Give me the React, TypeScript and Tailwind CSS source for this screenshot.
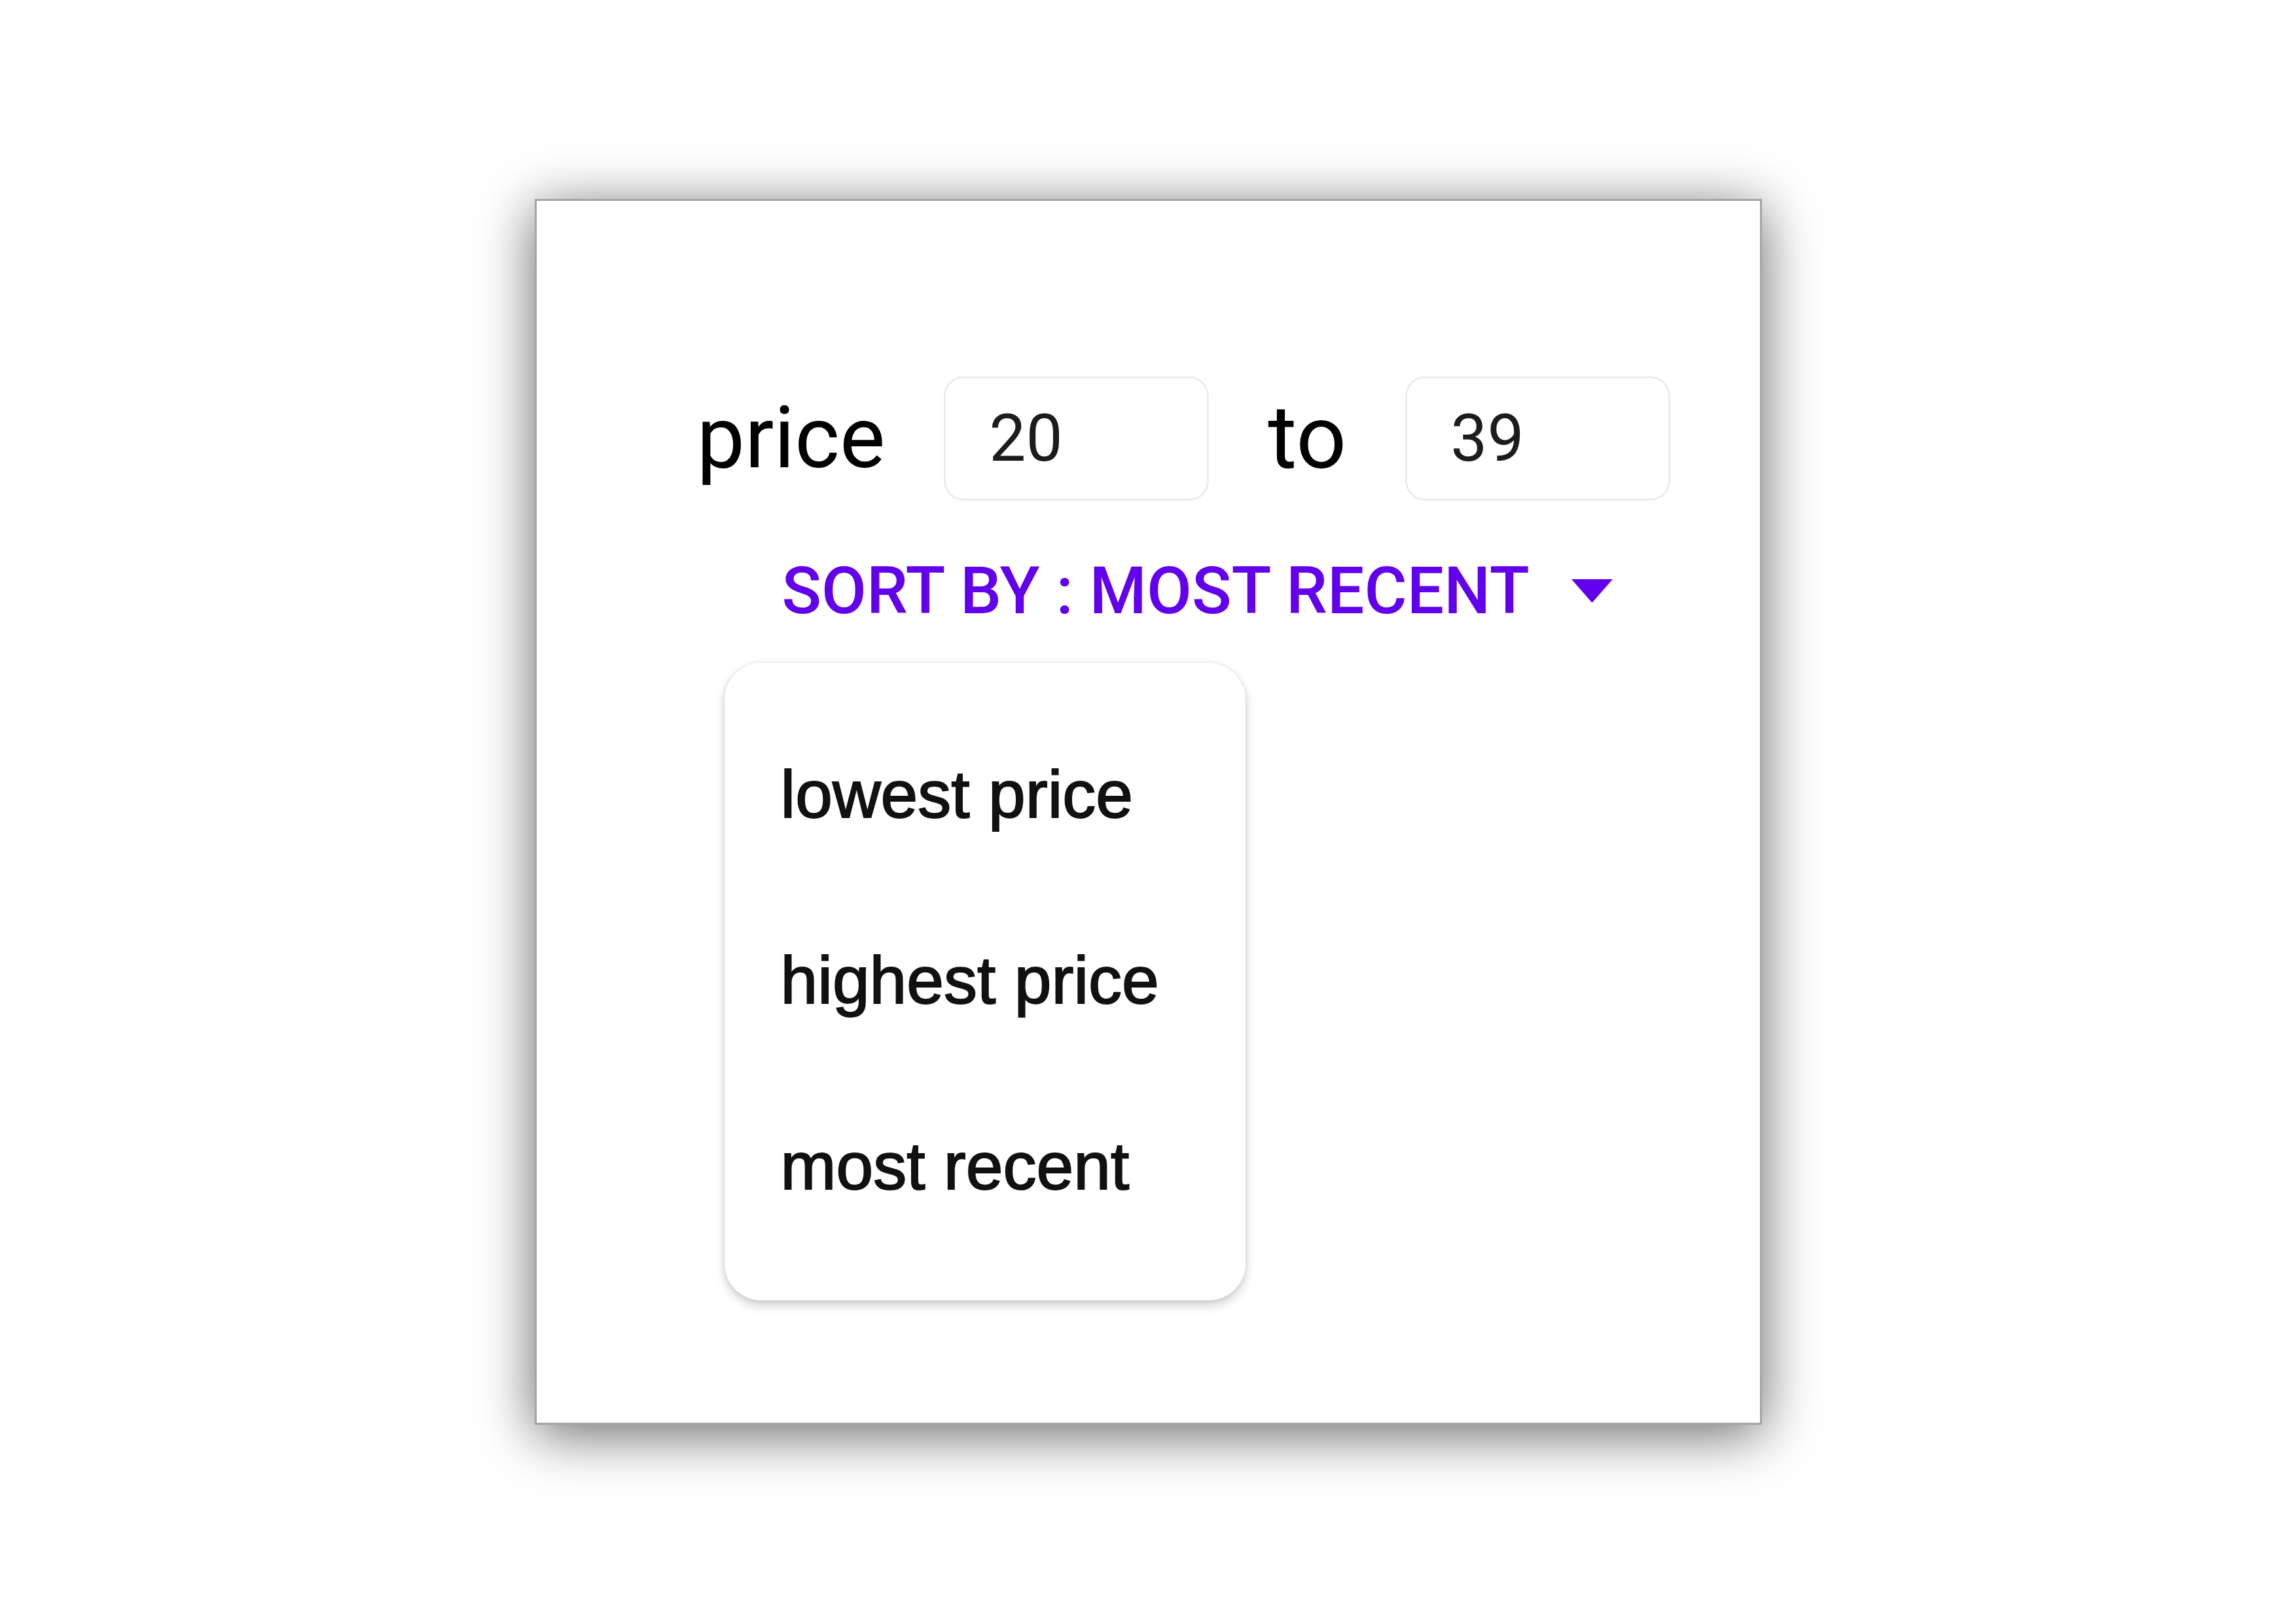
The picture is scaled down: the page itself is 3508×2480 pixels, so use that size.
import React from 'react';

const roboto = { fontFamily: 'Roboto, "Liberation Sans", sans-serif' };

const PriceInput = ({ value }: { value: string }) => (
  <input
    readOnly
    defaultValue={value}
    className="w-[405px] h-[190px] border-[3px] border-[#ececec] rounded-[30px] pl-[66px] text-[100px] text-[#1c1c1c] bg-white outline-none"
    style={roboto}
  />
);

const SortMenu = () => {
  const items = ['lowest price', 'highest price', 'most recent'];
  return (
    <div
      className="absolute left-[4px] top-[185px] w-[796px] h-[974px] bg-white rounded-[56px] py-[60px] shadow-[0_8px_16px_rgba(0,0,0,0.18),0_0_6px_rgba(0,0,0,0.1)]"
      style={{ fontFamily: '"Liberation Sans", Arial, sans-serif' }}
    >
      {items.map((item) => (
        <div
          key={item}
          className="h-[284px] flex items-center pl-[86px] text-[102px] text-[#111] [-webkit-text-stroke:2px_#111]"
        >
          {item}
        </div>
      ))}
    </div>
  );
};

export default function App() {
  return (
    <div className="min-h-screen w-full bg-white flex items-center justify-center">
      <div className="w-[1875px] h-[1873px] bg-white border-[3px] border-[#a4a4a4] shadow-[0_14px_80px_rgba(0,0,0,0.6)] pl-[245px] pt-[268px]">
        <div className="flex items-center gap-[90px]" style={roboto}>
          <span className="text-[131px] leading-none text-black">price</span>
          <PriceInput value="20" />
          <span className="text-[135px] leading-none text-black">to</span>
          <PriceInput value="39" />
        </div>

        <div className="relative inline-flex items-center h-[150px] mt-[63px] ml-[38px] pl-[92px] pr-[89px]">
          <span className="text-[100px] leading-none font-medium text-[#6200ee] uppercase" style={roboto}>
            Sort by : most recent
          </span>
          <svg width="63" height="36" viewBox="0 0 63 36" className="ml-[64px]">
            <polygon points="0,0 63,0 31.5,36" fill="#6200ee" />
          </svg>
          <SortMenu />
        </div>
      </div>
    </div>
  );
}
